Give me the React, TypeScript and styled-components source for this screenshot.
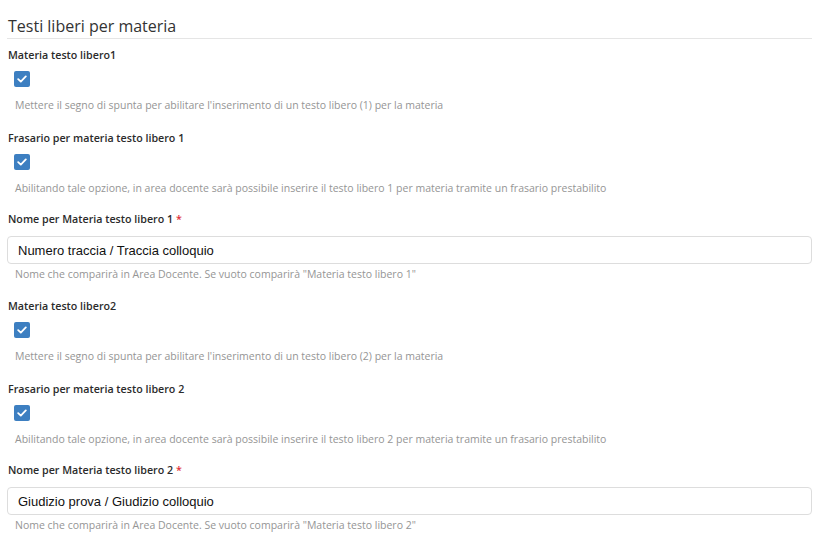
import React from 'react';
import styled, {createGlobalStyle} from "styled-components";

const GlobalStyle = createGlobalStyle`
  body {
    margin: 0;
    background: #ffffff;
    font-family: "Open Sans", sans-serif;
    color: #333333;
  }
`

type CheckField = { kind: "check"; label: string; help: string; space: number }
type TextField = { kind: "text"; label: string; value: string; help: string; space: number }
type Field = CheckField | TextField

const fields: Field[] = [
    {kind: "check", label: "Materia testo libero1", help: "Mettere il segno di spunta per abilitare l'inserimento di un testo libero (1) per la materia", space: 17},
    {kind: "check", label: "Frasario per materia testo libero 1", help: "Abilitando tale opzione, in area docente sarà possibile inserire il testo libero 1 per materia tramite un frasario prestabilito", space: 15},
    {kind: "text", label: "Nome per Materia testo libero 1", value: "Numero traccia / Traccia colloquio", help: "Nome che comparirà in Area Docente. Se vuoto comparirà \"Materia testo libero 1\"", space: 16},
    {kind: "check", label: "Materia testo libero2", help: "Mettere il segno di spunta per abilitare l'inserimento di un testo libero (2) per la materia", space: 17},
    {kind: "check", label: "Frasario per materia testo libero 2", help: "Abilitando tale opzione, in area docente sarà possibile inserire il testo libero 2 per materia tramite un frasario prestabilito", space: 15},
    {kind: "text", label: "Nome per Materia testo libero 2", value: "Giudizio prova / Giudizio colloquio", help: "Nome che comparirà in Area Docente. Se vuoto comparirà \"Materia testo libero 2\"", space: 0},
]

const CheckIcon = () => (
    <svg width="10" height="8" viewBox="0 0 10 8">
        <path d="M1.2 4.2 L3.8 6.6 L8.8 1.4" fill="none" stroke="#ffffff" strokeWidth="1.8" strokeLinecap="round" strokeLinejoin="round"/>
    </svg>
)

export default function App() {
    return (
        <>
            <GlobalStyle/>
            <Section>
                <Title>Testi liberi per materia</Title>
                <FieldList>
                    {fields.map((f) => (
                        <FieldGroup key={f.label} $space={f.space}>
                            <Label>
                                {f.label}
                                {f.kind === "text" && <Required> *</Required>}
                            </Label>
                            {f.kind === "check" ? (
                                <>
                                    <CheckBox><CheckIcon/></CheckBox>
                                    <HelpText $top={10}>{f.help}</HelpText>
                                </>
                            ) : (
                                <>
                                    <Input type="text" defaultValue={f.value}/>
                                    <HelpText $top={2}>{f.help}</HelpText>
                                </>
                            )}
                        </FieldGroup>
                    ))}
                </FieldList>
            </Section>
        </>
    );
}

const Section = styled.section`
  width: 805px;
  padding-left: 7px;
`

const Title = styled.h3`
  margin: 0;
  padding: 16px 0 2px 1px;
  font-size: 16px;
  line-height: 20px;
  font-weight: 400;
  color: #333333;
  border-bottom: 1px solid #e5e5e5;
`

const FieldList = styled.div`
  display: flex;
  flex-direction: column;
  padding-top: 8px;
`

const FieldGroup = styled.div<{ $space: number }>`
  display: flex;
  flex-direction: column;
  align-items: flex-start;
  margin-bottom: ${p => p.$space}px;
`

const Label = styled.label`
  padding-left: 1px;
  font-size: 10.7px;
  line-height: 16px;
  font-weight: 600;
  color: #2b2b2b;
`

const Required = styled.span`
  color: #e0303a;
`

const CheckBox = styled.span`
  display: flex;
  align-items: center;
  justify-content: center;
  width: 16px;
  height: 16px;
  margin: 8px 0 0 7px;
  border-radius: 2px;
  background: #3d7fc1;
`

const HelpText = styled.div<{ $top: number }>`
  margin-top: ${p => p.$top}px;
  padding-left: 8px;
  font-size: 10.5px;
  line-height: 16px;
  color: #959595;
`

const Input = styled.input`
  box-sizing: border-box;
  width: 100%;
  height: 28px;
  margin-top: 9px;
  padding: 0 10px;
  border: 1px solid #dddddd;
  border-radius: 4px;
  font-family: "Liberation Sans", Arial, sans-serif;
  font-size: 13px;
  color: #111111;
  outline: none;
`
